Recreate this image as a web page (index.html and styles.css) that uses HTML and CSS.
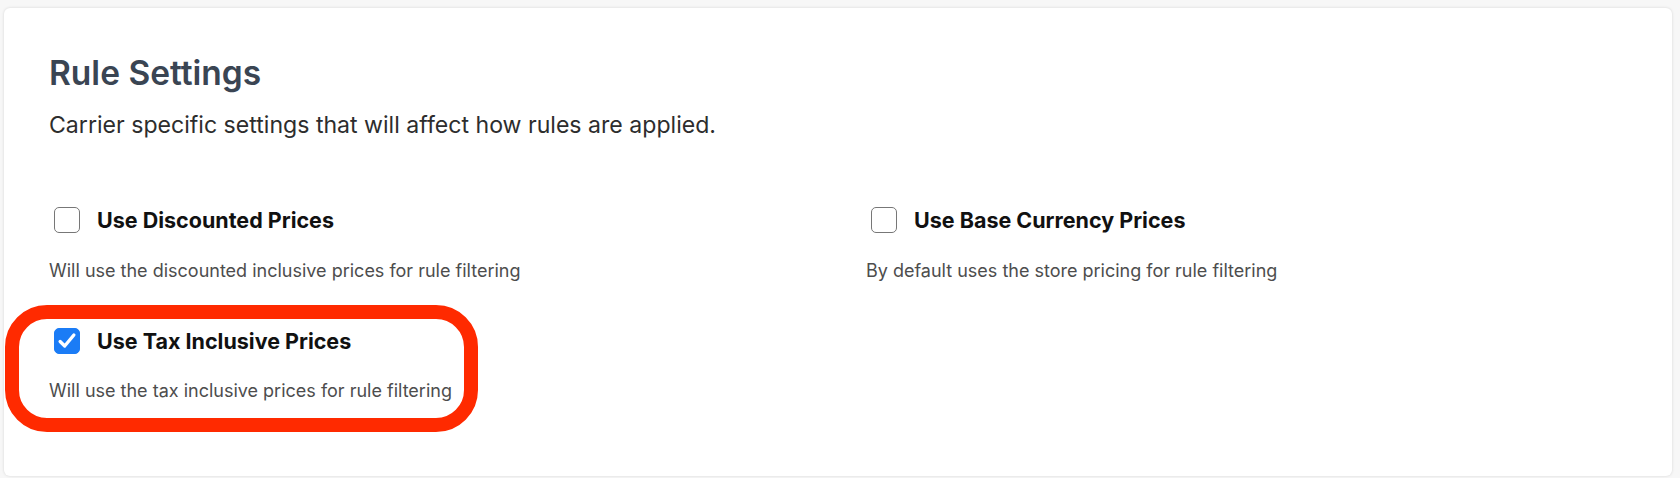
FILE: index.html
```html
<!DOCTYPE html>
<html lang="en">
<head>
    <meta charset="UTF-8">
    <title>Rule Settings</title>
    <link rel="stylesheet" href="styles.css">
</head>
<body>
    <div class="card">
        <h2 class="card-title">Rule Settings</h2>
        <p class="card-subtitle">Carrier specific settings that will affect how rules are applied.</p>
        <div class="settings-grid">
            <div class="setting">
                <label class="setting-label"><span class="check"></span>Use Discounted Prices</label>
                <p class="setting-help">Will use the discounted inclusive prices for rule filtering</p>
            </div>
            <div class="setting">
                <label class="setting-label"><span class="check"></span>Use Base Currency Prices</label>
                <p class="setting-help">By default uses the store pricing for rule filtering</p>
            </div>
            <div class="setting">
                <label class="setting-label">
                    <span class="check checked">
                        <svg viewBox="0 0 24 24" width="22" height="22"><polyline points="4.5,12.5 9.5,17.5 19.5,5.5" fill="none" stroke="#fff" stroke-width="3.6" stroke-linecap="round" stroke-linejoin="round"/></svg>
                    </span>Use Tax Inclusive Prices
                </label>
                <p class="setting-help">Will use the tax inclusive prices for rule filtering</p>
            </div>
        </div>
    </div>
    <div class="highlight"></div>
</body>
</html>
```
FILE: styles.css
```css
body {
    margin: 0;
    padding: 8px 8px 2px 4px;
    background-color: #f7f7f7;
    font-family: "Inter", sans-serif;
}

.card {
    height: 468px;
    box-sizing: border-box;
    padding: 45px 45px 0;
    background: #fff;
    border-radius: 6px;
    box-shadow: 0 0 3px rgba(0, 0, 0, 0.14);
}

.card-title {
    margin: 0;
    font-size: 33.5px;
    line-height: 40px;
    font-weight: 600;
    color: #3a4553;
}

.card-subtitle {
    margin: 17px 0 0;
    font-size: 23.1px;
    line-height: 30px;
    color: #2d2d2d;
}

.settings-grid {
    display: grid;
    grid-template-columns: 817px 1fr;
    margin-top: 67px;
    row-gap: 46px;
}

.setting-label {
    display: flex;
    align-items: center;
    gap: 17px;
    padding-left: 5px;
    font-size: 21.5px;
    line-height: 26px;
    font-weight: 700;
    color: #111;
}

.check {
    display: flex;
    align-items: center;
    justify-content: center;
    width: 26px;
    height: 26px;
    box-sizing: border-box;
    border: 1.5px solid #777;
    border-radius: 5px;
}

.check.checked {
    background: #1b7cf6;
    border-color: #1b7cf6;
}

.setting-help {
    margin: 26.5px 0 0;
    font-size: 18px;
    line-height: 22px;
    color: #4d4d4d;
}

.highlight {
    position: absolute;
    top: 305px;
    left: 5px;
    width: 473px;
    height: 127px;
    box-sizing: border-box;
    border: 14px solid #ff2a00;
    border-radius: 42px;
}
```
